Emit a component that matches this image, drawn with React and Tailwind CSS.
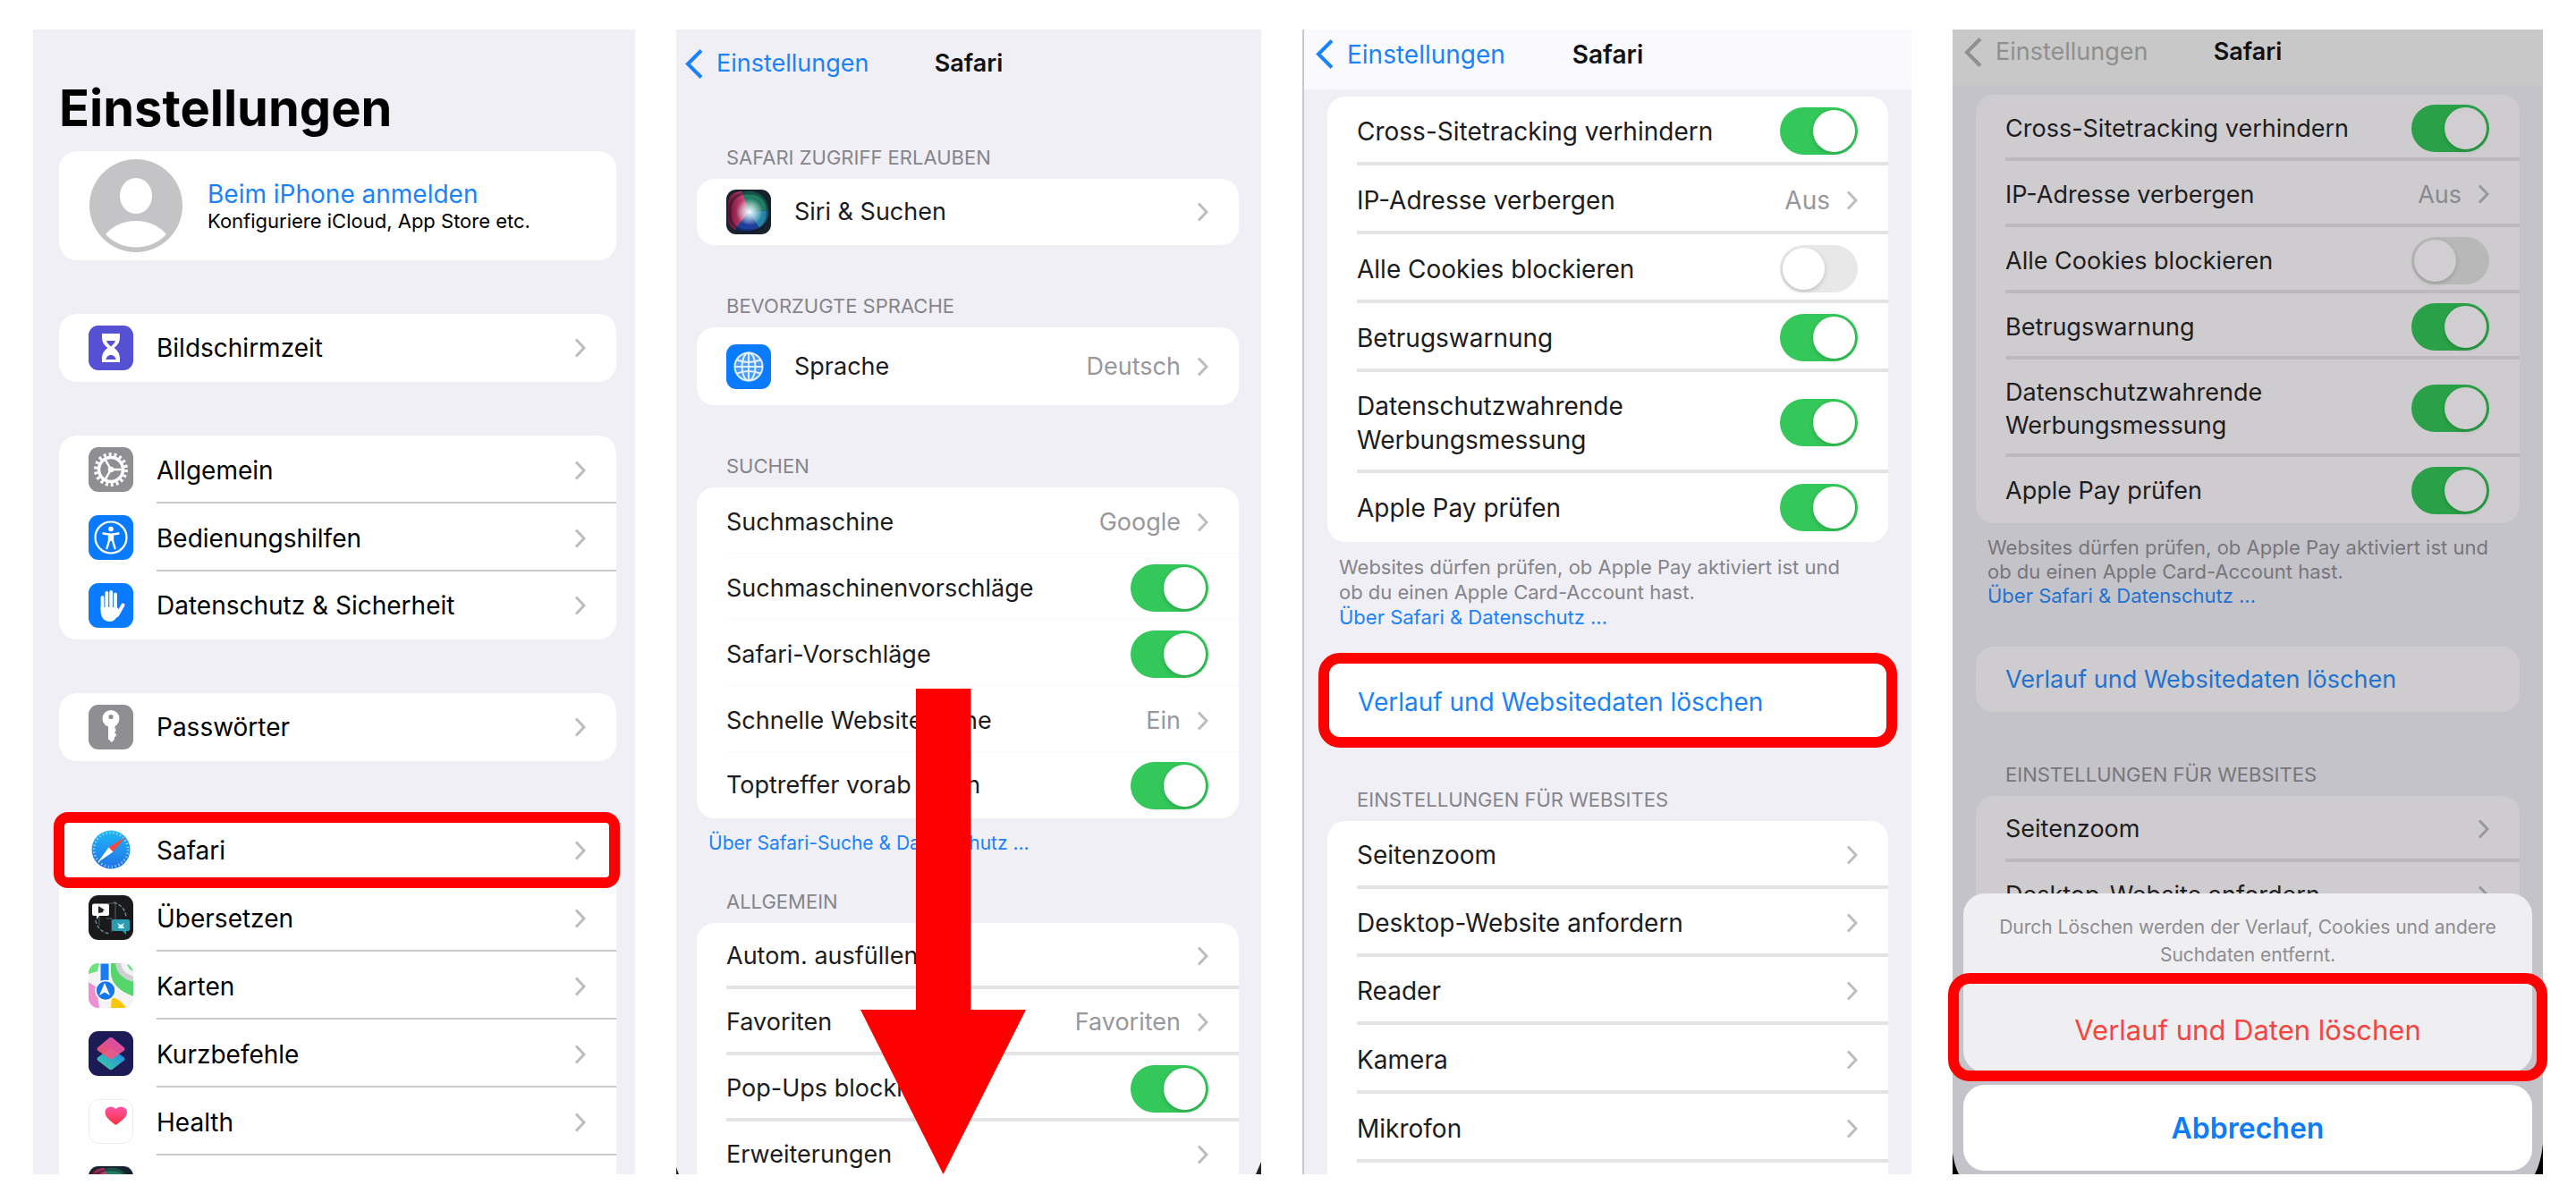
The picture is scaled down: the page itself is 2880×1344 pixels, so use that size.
import React from 'react';

// Colour sets for the normal screens and the one behind the action sheet
const light = {
  card: 'bg-white',
  text: 'text-[#1c1c1e]',
  value: 'text-[#98989c]',
  chevron: 'text-[#bcbcc0]',
  line: 'border-[#e4e4e6]',
  title: 'text-[#85858b]',
  link: 'text-[#1a82fb]',
  toggle: 'bg-[#e8e8e9] checked:bg-[#34c759] before:bg-white',
};

const dimmed = {
  card: 'bg-[#cfcccf]',
  text: 'text-[#1e1d1f]',
  value: 'text-[#8a898d]',
  chevron: 'text-[#98979b]',
  line: 'border-[#bbb9bd]',
  title: 'text-[#77767b]',
  link: 'text-[#2273cf]',
  toggle: 'bg-[#b9b8b9] checked:bg-[#2aa148] before:bg-[#d1ced1]',
};

function Chevron({ className }) {
  return (
    <svg viewBox="0 0 13 22" fill="none" stroke="currentColor" strokeWidth="3" className={`w-[13px] h-[22px] shrink-0 ${className}`}>
      <path d="M2 1.5 L11 11 L2 20.5" />
    </svg>
  );
}

function Row({ theme = light, icon, label, value, toggle, last, height = 'h-[74px]', line, textColor, multiline }) {
  const inner = (
    <>
      {icon && <span className="shrink-0 mr-[26px]">{icon}</span>}
      <span className={`flex flex-1 items-center self-stretch pr-[34px] ${last ? '' : `pt-1 ${line || `border-b-4 ${theme.line}`}`}`}>
        <span className={`flex-1 ${multiline ? 'whitespace-pre-line' : 'whitespace-nowrap'}`}>{label}</span>
        {value && <span className={`mr-[18px] ${theme.value}`}>{value}</span>}
        {toggle === undefined ? (
          <Chevron className={theme.chevron} />
        ) : (
          <input
            type="checkbox"
            role="switch"
            defaultChecked={toggle}
            className={`appearance-none flex items-center shrink-0 w-[87px] h-[53px] p-[3px] rounded-full before:content-[''] before:block before:size-[47px] before:rounded-full before:shadow-[0_2px_5px_rgba(0,0,0,0.18)] checked:before:ml-auto ${theme.toggle}`}
          />
        )}
      </span>
    </>
  );
  const cls = `flex items-center pl-[33px] ${height} ${textColor || theme.text}`;
  return toggle === undefined ? <a href="#" className={cls}>{inner}</a> : <label className={cls}>{inner}</label>;
}

function Nav({ className, backColor = 'text-[#1a82fb]' }) {
  return (
    <header className={`grid grid-cols-[1fr_auto_1fr] items-center ${className}`}>
      <a href="#" className={`flex items-center gap-[15px] ${backColor}`}>
        <svg viewBox="0 0 20 33" fill="none" stroke="currentColor" strokeWidth="4" className="w-5 h-[33px] shrink-0">
          <path d="M18 1.5 L3 16.5 L18 31.5" />
        </svg>
        Einstellungen
      </a>
      <h2 className="font-semibold text-[#111113]">Safari</h2>
    </header>
  );
}

function GroupTitle({ theme = light, className = '', children }) {
  return <h3 className={`pl-[33px] pb-[10px] text-[22px] leading-7 uppercase whitespace-nowrap ${theme.title} ${className}`}>{children}</h3>;
}

/* ---------- icons ---------- */

function Tile({ bg, children }) {
  return (
    <svg viewBox="0 0 50 50" className="size-[50px] block">
      <rect width="50" height="50" rx="11" fill={bg} />
      {children}
    </svg>
  );
}

const HourglassIcon = () => (
  <Tile bg="#5650d2">
    <path d="M15 9h20v3.500c0 6-2 9-6.500 12.500C33 28.500 35 31.500 35 37.500V41H15v-3.500c0-6 2-9 6.500-12.500C17 21.500 15 18.500 15 12.500z" fill="#fff" />
    <path d="M20 17h10c-1 3-3 4.500-5 6.500-2-2-4-3.500-5-6.500z" fill="#5650d2" />
    <path d="M19.500 38c.5-3.500 3-5 5.500-5s5 1.500 5.500 5z" fill="#5650d2" />
  </Tile>
);

const GearIcon = () => (
  <Tile bg="#8e8e93">
    <g fill="none" stroke="#fff">
      <circle cx="25" cy="25" r="17" strokeWidth="4" strokeDasharray="2.970 2.970" />
      <circle cx="25" cy="25" r="13.500" strokeWidth="3.500" />
      <path d="M25 25H38M25 25L18.500 13.700M25 25L18.500 36.300" strokeWidth="2.500" />
      <circle cx="25" cy="25" r="2" strokeWidth="2.500" />
    </g>
  </Tile>
);

const AccessibilityIcon = () => (
  <Tile bg="#0a7aff">
    <circle cx="25" cy="25" r="17.500" fill="none" stroke="#fff" strokeWidth="2.200" />
    <circle cx="25" cy="15.500" r="2.800" fill="#fff" />
    <path d="M16.500 20.500L23 21.500v7l-2.500 8.500M33.500 20.500L27 21.500v7l2.500 8.500" fill="none" stroke="#fff" strokeWidth="2.400" strokeLinecap="round" />
    <path d="M22.500 20.500h5V29h-5z" fill="#fff" />
  </Tile>
);

const HandIcon = () => (
  <Tile bg="#0a7aff">
    <g fill="none" stroke="#fff" strokeWidth="3.800" strokeLinecap="round">
      <path d="M15.500 16V30M20.300 11V28M25.200 10V28M30 12.500V30" />
      <path d="M38.500 24.500L32 36" strokeWidth="4" />
    </g>
    <path d="M13.600 27H32l3 4c-2.500 6-5 12-11 12-7 0-10.400-5-10.400-12z" fill="#fff" />
  </Tile>
);

const KeyIcon = () => (
  <Tile bg="#8e8e93">
    <circle cx="25" cy="15.500" r="9.500" fill="#fff" />
    <path d="M22 23h7.500v3.500l1.500 2-2 2.500 2.500 3-2.500 2.500v2L26 42l-4-3.500z" fill="#fff" />
    <circle cx="25" cy="13.500" r="2.600" fill="#8e8e93" />
  </Tile>
);

const SafariIcon = () => (
  <Tile bg="#fff">
    <defs>
      <linearGradient id="safari" x1="0" y1="0" x2="0" y2="1">
        <stop offset="0" stopColor="#1fb6f8" />
        <stop offset="1" stopColor="#2273e6" />
      </linearGradient>
    </defs>
    <circle cx="25" cy="25" r="21.500" fill="url(#safari)" />
    <circle cx="25" cy="25" r="19" fill="none" stroke="#bfe3fb" strokeWidth="2.500" strokeDasharray="1 2.980" />
    <path d="M41 11L22.500 22.500l5 5z" fill="#fb4540" />
    <path d="M10 39.500L22.500 22.500l5 5z" fill="#fff" />
  </Tile>
);

const TranslateIcon = () => (
  <Tile bg="#1a1a1c">
    <path d="M28 8c8 2 13 8 14 16M8 28c1 8 7 14 16 15" fill="none" stroke="#6c8a8d" strokeWidth="1.500" strokeDasharray="4 2" />
    <path d="M22 9h8v22M12 24v10M20 26h6v15" fill="none" stroke="#4d6467" strokeWidth="1" />
    <path d="M6 9.500h15q2 0 2 2V21q0 2-2 2h-9l-3 4v-4H6q-2 0-2-2v-9.500q0-2 2-2z" fill="#fff" />
    <path d="M11 12l7 4.500-2 .5.500 2-5.500 1z" fill="#222" />
    <path d="M28 27h16q2 0 2 2v9q0 2-2 2h-2v4l-4-4H28q-2 0-2-2v-9q0-2 2-2z" fill="#2b9db3" />
    <path d="M32 31l4 2 4-2-1.500 3 1.500 3H33l1-3z" fill="#d6f1f5" />
  </Tile>
);

const MapsIcon = () => (
  <svg viewBox="0 0 50 50" className="size-[50px] block">
    <defs>
      <clipPath id="maps"><rect width="50" height="50" rx="11" /></clipPath>
    </defs>
    <g clipPath="url(#maps)">
      <rect width="50" height="50" fill="#f3f2f5" />
      <path d="M0 0h12L10 9 0 12z" fill="#6ee27c" />
      <path d="M25 0h10c1 10 5 14 15 20v17C34 31 25 22 25 10z" fill="#54d66c" />
      <path d="M33 0c1 9 7 15 17 18" fill="none" stroke="#cfd0d3" strokeWidth="6" />
      <path d="M43 0q1 7 7 9V0z" fill="#6ee27c" />
      <path d="M0 21l9 6q1 8 3 23H0z" fill="#ee8fd2" />
      <path d="M26 38q10 2 16 12H25z" fill="#fdc80b" />
      <path d="M13 0h10v24H13z" fill="#1a7df5" stroke="#fff" strokeWidth="1" />
      <circle cx="19" cy="30.500" r="11" fill="#1576ee" stroke="#fff" strokeWidth="1.500" />
      <path d="M18 22l6 14-6-3.500-6 3.500z" fill="#fff" />
    </g>
  </svg>
);

const ShortcutsIcon = () => (
  <Tile bg="#1c1b55">
    <defs>
      <linearGradient id="scTop" x1="1" y1="0" x2="0" y2="1">
        <stop offset="0" stopColor="#e250c4" />
        <stop offset="1" stopColor="#fb5a5c" />
      </linearGradient>
      <linearGradient id="scLow" x1="1" y1="0" x2="0" y2="1">
        <stop offset="0" stopColor="#1f7df0" />
        <stop offset="1" stopColor="#3fd59b" />
      </linearGradient>
    </defs>
    <path d="M25 19L40 29.500Q41 31 40 32.500L27 42.500Q25 44 23 42.500L10 32.500Q9 31 10 29.500z" fill="url(#scLow)" />
    <path d="M23 7.500Q25 6 27 7.500L40 18.500Q41 20 40 21.500L27 30.500Q25 32 23 30.500L10 21.500Q9 20 10 18.500z" fill="url(#scTop)" opacity="0.930" />
  </Tile>
);

const HealthIcon = () => (
  <svg viewBox="0 0 50 50" className="size-[50px] block">
    <defs>
      <linearGradient id="heart" x1="0" y1="0" x2="0" y2="1">
        <stop offset="0" stopColor="#fb55a8" />
        <stop offset="1" stopColor="#fb2f3b" />
      </linearGradient>
    </defs>
    <rect x="0.500" y="0.500" width="49" height="49" rx="11" fill="#fff" stroke="#ececee" />
    <path d="M30.500 29C24 24 18.500 20 18.500 14.500 18.500 8 27 6.500 30.500 11 34 6.500 43 8 43 14.500 43 20 37 24 30.500 29z" fill="url(#heart)" />
  </svg>
);

// id keeps the gradients of the two drawn tiles apart
const SiriIcon = ({ id }) => (
  <Tile bg="#17222f">
    <defs>
      <radialGradient id={`${id}-glow`}>
        <stop offset="0" stopColor="#fff" />
        <stop offset="0.300" stopColor="#d9f3fa" stopOpacity="0.800" />
        <stop offset="1" stopColor="#fff" stopOpacity="0" />
      </radialGradient>
      <linearGradient id={`${id}-left`} x1="0" y1="0" x2="1" y2="0">
        <stop offset="0" stopColor="#6e1238" />
        <stop offset="1" stopColor="#f0588e" />
      </linearGradient>
    </defs>
    <path d="M18 2Q2 2 2 16V34Q2 40 10 45L27 26z" fill={`url(#${id}-left)`} />
    <path d="M18 3q14-3 22 4 7 6 7 16L26 25z" fill="#1f7d64" />
    <path d="M47 23q2 12-10 20L25 25z" fill="#2583a8" />
    <path d="M10 44q13 6 27-1L25 25z" fill="#1d3f9c" />
    <rect x="4" y="4" width="42" height="42" rx="18" fill="none" stroke="#0d1420" strokeOpacity="0.450" strokeWidth="3" />
    <circle cx="26" cy="25" r="15" fill={`url(#${id}-glow)`} />
  </Tile>
);

const GlobeIcon = () => (
  <Tile bg="#0a7aff">
    <circle cx="25" cy="25" r="15.500" fill="#fff" fillOpacity="0.250" />
    <g fill="none" stroke="#e2efff" strokeWidth="2">
      <circle cx="25" cy="25" r="15.500" />
      <ellipse cx="25" cy="25" rx="7.500" ry="15.500" />
      <path d="M25 9.500v31M9.500 25h31M12 17.500q13 5 26 0M12 32.500q13-5 26 0" />
    </g>
  </Tile>
);

const Avatar = () => (
  <svg viewBox="0 0 104 104" className="size-[104px] shrink-0">
    <circle cx="52" cy="52" r="52" fill="#c4c4c6" />
    <ellipse cx="52" cy="41" rx="18" ry="20" fill="#fff" />
    <path d="M18 84q13-15 34-15t34 15a47 47 0 0 1-68 0z" fill="#fff" />
  </svg>
);

/* ---------- screens ---------- */

const thinLine = 'border-b-2 border-[#c9c9cb]';

function AppRow(props) {
  return <Row height="h-[76px]" line={thinLine} textColor="text-black" {...props} />;
}

function SettingsScreen() {
  return (
    <section className="bg-[#f0eff5] overflow-hidden pt-[56px] pl-[29px] pr-[21px]">
      <h1 className="text-[56px] leading-16 font-bold text-black">Einstellungen</h1>
      <a href="#" className="mt-4 flex items-center gap-7 h-[122px] pl-[34px] rounded-[20px] bg-white">
        <Avatar />
        <span className="pt-[3px] whitespace-nowrap">
          <span className="block leading-[30px] text-[#1a82fb]">Beim iPhone anmelden</span>
          <span className="block text-[22px] leading-[30px] text-black">Konfiguriere iCloud, App Store etc.</span>
        </span>
      </a>
      <div className="mt-15 rounded-[20px] bg-white">
        <AppRow icon={<HourglassIcon />} label="Bildschirmzeit" last />
      </div>
      <div className="mt-15 rounded-[20px] bg-white">
        <AppRow icon={<GearIcon />} label="Allgemein" />
        <AppRow icon={<AccessibilityIcon />} label="Bedienungshilfen" />
        <AppRow icon={<HandIcon />} label="Datenschutz & Sicherheit" last />
      </div>
      <div className="mt-15 rounded-[20px] bg-white">
        <AppRow icon={<KeyIcon />} label="Passwörter" last />
      </div>
      <div className="relative mt-[61px] rounded-t-[20px] bg-white">
        <AppRow icon={<SafariIcon />} label="Safari" />
        <AppRow icon={<TranslateIcon />} label="Übersetzen" />
        <AppRow icon={<MapsIcon />} label="Karten" />
        <AppRow icon={<ShortcutsIcon />} label="Kurzbefehle" />
        <AppRow icon={<HealthIcon />} label="Health" />
        <div className="h-[76px] pl-[33px] pt-3">
          <SiriIcon id="siri-list" />
        </div>
        <div className="absolute -top-1 -left-[6px] -right-1 h-[85px] border-12 border-[#ff0000] rounded-2xl pointer-events-none" />
      </div>
    </section>
  );
}

function SafariScreen() {
  const faint = 'border-b border-[#fafafa]';
  return (
    <section className="relative bg-[#f0eff5] overflow-hidden text-[27px]">
      <Nav className="h-[76px] px-[10px]" />
      <div className="ml-[23px] mr-[25px]">
        <GroupTitle className="mt-[53px]">Safari Zugriff erlauben</GroupTitle>
        <div className="rounded-[20px] bg-white">
          <Row icon={<SiriIcon id="siri-safari" />} label="Siri & Suchen" last />
        </div>
        <GroupTitle className="mt-[54px]">Bevorzugte Sprache</GroupTitle>
        <div className="rounded-[20px] bg-white">
          <Row icon={<GlobeIcon />} label="Sprache" value="Deutsch" height="h-[87px]" last />
        </div>
        <GroupTitle className="mt-[54px]">Suchen</GroupTitle>
        <div className="rounded-[20px] bg-white">
          <Row label="Suchmaschine" value="Google" line={faint} />
          <Row label="Suchmaschinenvorschläge" toggle={true} line={faint} />
          <Row label="Safari-Vorschläge" toggle={true} line={faint} />
          <Row label="Schnelle Websitesuche" value="Ein" line={faint} />
          <Row label="Toptreffer vorab laden" toggle={true} last />
        </div>
        <a href="#" className="block mt-[14px] pl-[13px] text-[21px] leading-7 text-[#1a82fb]">Über Safari-Suche & Datenschutz ...</a>
        <GroupTitle className="mt-[37px]">Allgemein</GroupTitle>
        <div className="rounded-t-[20px] bg-white">
          <Row label="Autom. ausfüllen" />
          <Row label="Favoriten" value="Favoriten" />
          <Row label="Pop-Ups blockieren" toggle={true} />
          <Row label="Erweiterungen" />
        </div>
      </div>
      <svg viewBox="0 0 185 543" className="absolute bottom-0 left-[206px] w-[185px] h-[543px] pointer-events-none">
        <path d="M62 0H123.500V359H185L92.500 543L0 359H62z" fill="#ff0000" />
      </svg>
      <svg viewBox="0 0 4 8" className="absolute bottom-0 left-0 w-1 h-2"><path d="M0 0L3 8H0z" fill="#222" /></svg>
      <svg viewBox="0 0 6 14" className="absolute bottom-0 right-0 w-[6px] h-[14px]"><path d="M6 0V14H0z" fill="#222" /></svg>
    </section>
  );
}

function PrivacyRows({ theme, height, tall }) {
  return (
    <div className={`rounded-[20px] ${theme.card}`}>
      <Row theme={theme} height={height} label="Cross-Sitetracking verhindern" toggle={true} />
      <Row theme={theme} height={height} label="IP-Adresse verbergen" value="Aus" />
      <Row theme={theme} height={height} label="Alle Cookies blockieren" toggle={false} />
      <Row theme={theme} height={height} label="Betrugswarnung" toggle={true} />
      <Row theme={theme} height={tall} label={'Datenschutzwahrende\nWerbungsmessung'} toggle={true} multiline />
      <Row theme={theme} height={height} label="Apple Pay prüfen" toggle={true} last />
    </div>
  );
}

function PayNote({ theme, className }) {
  return (
    <p className={`mt-[14px] pl-[13px] text-[22px] whitespace-nowrap ${theme.title} ${className}`}>
      Websites dürfen prüfen, ob Apple Pay aktiviert ist und
      <br />
      ob du einen Apple Card-Account hast.
      <br />
      <a href="#" className={theme.link}>Über Safari & Datenschutz ...</a>
    </p>
  );
}

function ClearHistoryScreen() {
  return (
    <section className="bg-[#f0eff5] overflow-hidden border-l-2 border-[#c9c9cd]">
      <Nav className="h-[67px] pb-3 px-[13px] bg-[#f9f9fe]" />
      <div className="mx-[26px] mt-2">
        <PrivacyRows theme={light} height="h-[77px] leading-[38px]" tall="h-[113px] leading-[38px]" />
        <PayNote theme={light} className="leading-7" />
        <button type="button" className="block mt-[26px] -mx-[10px] w-[calc(100%+20px)] h-[106px] pt-[3px] pl-[32px] text-left border-12 border-[#ff0000] rounded-[24px] bg-white text-[#1a82fb] whitespace-nowrap">
          Verlauf und Websitedaten löschen
        </button>
        <GroupTitle className="mt-[44px]">Einstellungen für Websites</GroupTitle>
        <div className="h-[480px] rounded-t-[20px] bg-white">
          <Row height="h-[76px]" label="Seitenzoom" />
          <Row height="h-[76px]" label="Desktop-Website anfordern" />
          <Row height="h-[76px]" label="Reader" />
          <Row height="h-[77px]" label="Kamera" />
          <Row height="h-[77px]" label="Mikrofon" />
        </div>
      </div>
    </section>
  );
}

function ConfirmScreen() {
  return (
    <section className="relative min-h-0 text-[27px]">
      <div className="h-full overflow-hidden bg-[#c4c3c9]">
        <Nav className="h-[62px] pb-3 px-[13px] bg-[#c8c8c8]" backColor="text-[#8f8f90]" />
        <div className="mx-[26px] mt-[11px]">
          <PrivacyRows theme={dimmed} height="h-[74px] leading-[37px]" tall="h-[109px] leading-[37px]" />
          <PayNote theme={dimmed} className="leading-[27px]" />
          <button type="button" className={`block mt-[43px] w-full h-[73px] pl-[33px] text-left rounded-[20px] whitespace-nowrap ${dimmed.card} ${dimmed.link}`}>
            Verlauf und Websitedaten löschen
          </button>
          <GroupTitle theme={dimmed} className="mt-[56px]">Einstellungen für Websites</GroupTitle>
          <div className={`rounded-t-[20px] ${dimmed.card}`}>
            <Row theme={dimmed} label="Seitenzoom" />
            <Row theme={dimmed} label="Desktop-Website anfordern" />
          </div>
        </div>
      </div>
      <svg viewBox="0 0 7 24" className="absolute bottom-0 left-0 w-[7px] h-6"><path d="M0 0Q2 14 7 24H0z" fill="#000" /></svg>
      <svg viewBox="0 0 9 34" className="absolute bottom-0 right-0 w-[9px] h-[34px]"><path d="M9 0Q7 20 0 34H9z" fill="#000" /></svg>

      {/* Action sheet */}
      <div role="dialog" aria-label="Verlauf löschen" className="absolute bottom-1 inset-x-3 flex flex-col gap-[14px]">
        <div className="rounded-[24px] bg-[#efeef0]">
          <p className="h-[89px] pt-[22px] text-[21px] leading-[31px] text-center text-[#8e8d92]">
            Durch Löschen werden der Verlauf, Cookies und andere
            <br />
            Suchdaten entfernt.
          </p>
          <button type="button" className="relative block -mx-[17px] -mb-[10px] w-[calc(100%+34px)] h-[121px] pt-[6px] border-12 border-[#ff0000] rounded-[24px] text-[31px] text-[#f5453f]">
            Verlauf und Daten löschen
          </button>
        </div>
        <button type="button" className="h-24 pt-[2px] rounded-[24px] bg-white text-[32px] font-semibold text-[#0f7cfb]">Abbrechen</button>
      </div>
    </section>
  );
}

export default function App() {
  return (
    <main className="h-screen grid grid-rows-[minmax(0,1fr)] grid-cols-[673fr_654fr_681fr_660fr] gap-[46px] px-[37px] pt-[33px] pb-[31px] bg-white font-['Inter',sans-serif] text-[28px] leading-9">
      <SettingsScreen />
      <SafariScreen />
      <ClearHistoryScreen />
      <ConfirmScreen />
    </main>
  );
}
